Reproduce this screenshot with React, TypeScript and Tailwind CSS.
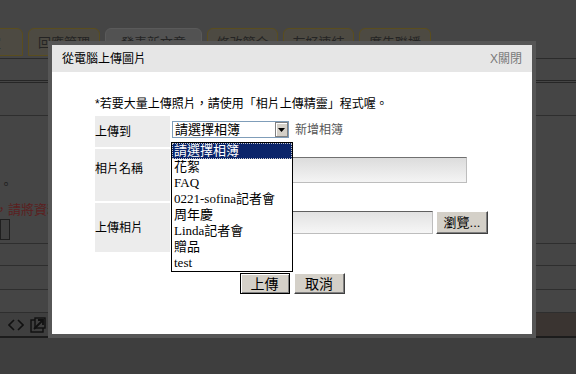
import React from "react";

const tabs = [
  { label: "設定", gold: true, w: "w-[70px]" },
  { label: "回應管理", gold: true, w: "w-[72px]" },
  { label: "發表新文章", gold: false, w: "w-[97px]" },
  { label: "修改簡介", gold: true, w: "w-[71px]" },
  { label: "友好連結", gold: true, w: "w-[71px]" },
  { label: "廣告聯播", gold: true, w: "w-[72px]" },
];

const albums = ["花絮", "FAQ", "0221-sofina記者會", "周年慶", "Linda記者會", "贈品", "test"];

function BackgroundPage() {
  return (
    <div className="flex h-full flex-col">
      <div className="h-[28px]" />
      {/* tabs */}
      <div className="-ml-[47px] flex h-[30px] gap-[5px]">
        {tabs.map((t) => (
          <div
            key={t.label}
            className={`${t.w} flex h-[28px] items-start justify-center rounded-t-[6px] border pt-[7px] text-[13px] leading-[14px] text-[#242424] ${
              t.gold ? "border-[#5a4d1e] bg-[#4d4a42]" : "border-[#5a5a5a] bg-[#525252]"
            }`}
          >
            {t.label}
          </div>
        ))}
      </div>
      <div className="h-[1px] bg-[#2b2b2b]" />
      <div className="h-[24px] border-b-[3px] border-double border-[#262626]" />
      <div className="h-[33px] border-b border-[#2e2e2e]" />
      {/* middle area */}
      <div className="flex h-[128px] flex-col justify-end border-b border-[#2e2e2e] pb-[3px]">
        <div className="text-[12px] leading-[14px] text-[#1c1c1c]">。</div>
        <div className="mt-[10px] -ml-[18px] whitespace-nowrap text-[13px] leading-[15px] text-[#5b1f1f]">
          議，請將資料填寫
        </div>
        <div className="mt-[2px] h-[21px] w-[10px] border border-[#1f1f1f] bg-[#404040]" />
      </div>
      <div className="h-[22px] border-b border-[#2e2e2e]" />
      <div className="h-[24px] border-b border-[#2e2e2e]" />
      <div className="h-[23px] border-b border-[#2e2e2e]" />
      {/* toolbar */}
      <div className="flex h-[23px] items-center justify-between bg-[#3f3f3f]">
        <div className="flex items-center gap-[6px] pl-[8px]">
          <svg width="16" height="12" viewBox="0 0 16 12" fill="none" stroke="#111" strokeWidth="1.6">
            <path d="M6 1 L1 6 L6 11" />
            <path d="M10 1 L15 6 L10 11" />
          </svg>
          <svg width="16" height="16" viewBox="0 0 16 16" fill="none" stroke="#111" strokeWidth="1.4">
            <rect x="1" y="3" width="12" height="12" />
            <rect x="5" y="1" width="10" height="10" fill="#3f3f3f" />
            <path d="M4 12 L13 3 M8 3 H13 V8" strokeWidth="1.8" />
          </svg>
        </div>
        <div className="h-full w-[40px] bg-[#3a3431]" />
      </div>
      <div className="h-[2px] bg-[#1c1c1c]" />
      <div className="flex-1 bg-[#3e3e3e]" />
    </div>
  );
}

function Modal() {
  return (
    <div className="absolute left-[48px] top-[41px] h-[297px] w-[488px] bg-[#565656] p-[4px]">
      <div className="flex h-full flex-col bg-white">
        <div className="flex h-[27px] items-center justify-between bg-[#e6e6e6] pl-[10px] pr-[10px]">
          <span className="text-[12px] text-black">從電腦上傳圖片</span>
          <span className="text-[12px] text-[#7a7a7a]">X關閉</span>
        </div>
        <div className="pl-[43px] pt-[25px]">
          <p className="text-[12px] leading-[14px] text-black">
            *若要大量上傳照片，請使用「相片上傳精靈」程式喔。
          </p>
          <div className="mt-[5px] flex w-[395px] flex-col gap-[2px]">
            {/* row 1 */}
            <div className="flex h-[31px]">
              <div className="flex w-[75px] items-center bg-[#ececec] text-[12px] text-black">上傳到</div>
              <div className="relative flex flex-1 items-start pl-[2px] pt-[5px]">
                <div className="flex h-[17px] w-[117px] items-center border border-[#7f9db9] bg-white">
                  <span className="flex-1 pl-[2px] text-[13px] leading-[15px] text-black">請選擇相簿</span>
                  <span className="flex h-[15px] w-[13px] items-center justify-center border border-[#808080] bg-[#d4d0c8] shadow-[inset_1px_1px_0_#fff]">
                    <svg width="7" height="4" viewBox="0 0 7 4">
                      <path d="M0 0 H7 L3.5 4 Z" fill="#000" />
                    </svg>
                  </span>
                </div>
                <span className="ml-[6px] mt-[2px] text-[12px] leading-[14px] text-[#555]">新增相簿</span>
                {/* open dropdown list */}
                <div className="absolute left-[1px] top-[26px] z-10 w-[122px] border border-black bg-white font-['Liberation_Serif','Noto_Sans_CJK_TC',serif] text-[13px] leading-[16px] text-black">
                  <div className="h-[16px] border border-dotted border-[#c8c8c8] bg-[#0a246a] pl-[1px] leading-[14px] text-white">
                    請選擇相簿
                  </div>
                  {albums.map((a) => (
                    <div key={a} className="h-[16px] whitespace-nowrap pl-[2px]">
                      {a}
                    </div>
                  ))}
                </div>
              </div>
            </div>
            {/* row 2 */}
            <div className="flex h-[52px]">
              <div className="flex w-[75px] items-start bg-[#ececec] pt-[11px] text-[12px] text-black">相片名稱</div>
              <div className="flex-1 pl-[5px] pt-[8px]">
                <div className="h-[26px] w-[292px] border border-[#bdbdbd] border-t-[#707070] bg-gradient-to-b from-[#dcdcdc] to-[#f4f4f4]" />
              </div>
            </div>
            {/* row 3 */}
            <div className="flex h-[49px]">
              <div className="flex w-[75px] items-center bg-[#ececec] text-[12px] text-black">上傳相片</div>
              <div className="flex flex-1 items-start gap-[3px] pl-[5px] pt-[8px]">
                <div className="h-[23px] w-[258px] border border-[#bdbdbd] border-t-[#606060] border-l-[#606060] bg-gradient-to-b from-[#e2e2e2] to-[#f6f6f6]" />
                <button className="flex h-[23px] w-[52px] items-center justify-center border border-[#404040] border-l-white border-t-white bg-[#d4d0c8] text-[13px] text-black shadow-[inset_-1px_-1px_0_#808080]">
                  瀏覽...
                </button>
              </div>
            </div>
          </div>
        </div>
        <div className="mt-[21px] flex justify-center gap-[4px]">
          <button className="flex h-[21px] w-[50px] items-center justify-center border border-black bg-[#d4d0c8] text-[14px] leading-[16px] text-black shadow-[inset_1px_1px_0_#fff,inset_-1px_-1px_0_#808080]">
            上傳
          </button>
          <button className="flex h-[21px] w-[51px] items-center justify-center border border-[#404040] border-l-white border-t-white bg-[#d4d0c8] text-[14px] leading-[16px] text-black shadow-[inset_-1px_-1px_0_#808080]">
            取消
          </button>
        </div>
      </div>
    </div>
  );
}

export default function App() {
  return (
    <div className="relative h-[374px] w-[576px] overflow-hidden bg-[#454545] font-['Liberation_Sans','Noto_Sans_CJK_TC',sans-serif]">
      <BackgroundPage />
      <Modal />
    </div>
  );
}
